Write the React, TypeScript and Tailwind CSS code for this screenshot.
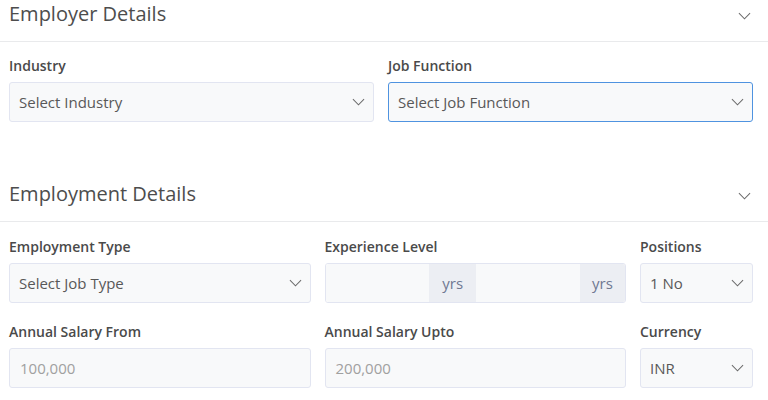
function Chevron({ className = '' }: { className?: string }) {
  return (
    <svg viewBox="0 0 14 8" className={`w-[13px] h-[8px] ${className}`} fill="none">
      <path d="M1 1l6 6 6-6" stroke="#6b6b6b" strokeWidth="1.1" />
    </svg>
  );
}

function SectionHeader({ title }: { title: string }) {
  return (
    <div className="flex items-start justify-between h-[42px] border-b border-[#e9eaec] pl-[9px] pr-[17px]">
      <h2 className="text-[20px] leading-[28px] text-[#4d4d4d] font-medium">{title}</h2>
      <Chevron className="mt-[12px]" />
    </div>
  );
}

function Label({ children }: { children: string }) {
  return <label className="block text-[14px] leading-[20px] font-semibold text-[#4a4a4a] mt-[1px] mb-[6px]">{children}</label>;
}

function SelectBox({ value, focused = false }: { value: string; focused?: boolean }) {
  return (
    <div
      className={`h-[40px] rounded-[3px] border flex items-center justify-between pl-[9px] pr-[8px] bg-[#f8f9fa] ${
        focused ? 'border-[#4f93e0]' : 'border-[#e2e5f1]'
      }`}
    >
      <span className="text-[15px] text-[#585858]">{value}</span>
      <Chevron />
    </div>
  );
}

function TextBox({ placeholder }: { placeholder: string }) {
  return (
    <div className="h-[40px] rounded-[3px] border border-[#e2e5f1] bg-[#f8f9fa] flex items-center pl-[10px]">
      <span className="text-[15px] text-[#a0a0a0]">{placeholder}</span>
    </div>
  );
}

function ExperienceRange() {
  return (
    <div className="h-[40px] flex rounded-[3px] border border-[#e2e5f1] overflow-hidden">
      <div className="flex-1 bg-[#f8f9fa]" />
      <div className="w-[47px] bg-[#eceef3] flex items-center justify-center text-[15px] text-[#6f7892]">yrs</div>
      <div className="flex-1 bg-[#f8f9fa]" />
      <div className="w-[45px] bg-[#eceef3] flex items-center justify-center text-[15px] text-[#6f7892]">yrs</div>
    </div>
  );
}

export default function App() {
  return (
    <div className="w-[768px] h-[400px] bg-white overflow-hidden" style={{ fontFamily: '"Open Sans", "Noto Sans", sans-serif' }}>
      <SectionHeader title="Employer Details" />
      <div className="grid grid-cols-2 gap-x-[14px] pl-[9px] pr-[15px] pt-[13px]">
        <div>
          <Label>Industry</Label>
          <SelectBox value="Select Industry" />
        </div>
        <div>
          <Label>Job Function</Label>
          <SelectBox value="Select Job Function" focused />
        </div>
      </div>

      <div className="mt-[58px]">
        <SectionHeader title="Employment Details" />
      </div>
      <div className="grid grid-cols-[1fr_1fr_113px] gap-x-[14px] gap-y-[18px] pl-[9px] pr-[15px] pt-[14px]">
        <div>
          <Label>Employment Type</Label>
          <SelectBox value="Select Job Type" />
        </div>
        <div>
          <Label>Experience Level</Label>
          <ExperienceRange />
        </div>
        <div>
          <Label>Positions</Label>
          <SelectBox value="1 No" />
        </div>
        <div>
          <Label>Annual Salary From</Label>
          <TextBox placeholder="100,000" />
        </div>
        <div>
          <Label>Annual Salary Upto</Label>
          <TextBox placeholder="200,000" />
        </div>
        <div>
          <Label>Currency</Label>
          <SelectBox value="INR" />
        </div>
      </div>
    </div>
  );
}
